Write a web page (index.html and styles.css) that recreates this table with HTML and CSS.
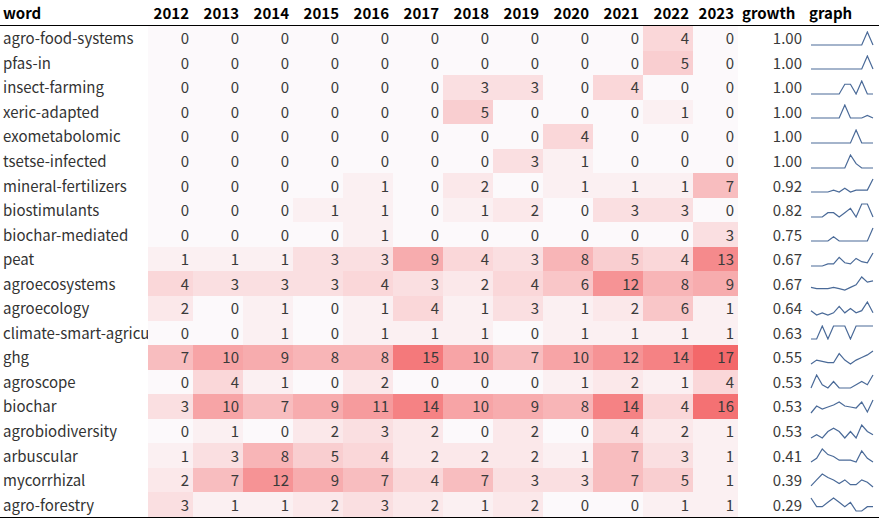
FILE: index.html
```html
<!DOCTYPE html>
<html lang="en">
<head>
<meta charset="utf-8">
<title>word growth</title>
<link rel="stylesheet" href="styles.css">
</head>
<body>
<table class="grid">
  <colgroup>
    <col class="c-word"><col class="c-first"><col class="c-year"><col class="c-year"><col class="c-year"><col class="c-year"><col class="c-year"><col class="c-year"><col class="c-year"><col class="c-year"><col class="c-year"><col class="c-year"><col class="c-last"><col class="c-growth"><col class="c-graph">
  </colgroup>
  <thead>
    <tr>
      <th class="h-word">word</th>
      <th class="h-num">2012</th><th class="h-num">2013</th><th class="h-num">2014</th><th class="h-num">2015</th><th class="h-num">2016</th><th class="h-num">2017</th><th class="h-num">2018</th><th class="h-num">2019</th><th class="h-num">2020</th><th class="h-num">2021</th><th class="h-num">2022</th><th class="h-num">2023</th>
      <th class="h-growth">growth</th>
      <th class="h-graph">graph</th>
    </tr>
  </thead>
  <tbody id="rows"></tbody>
</table>
<script src="script.js"></script>
</body>
</html>
```

FILE: styles.css
```css
html, body {
  margin: 0;
  padding: 0;
  background: #ffffff;
}
body {
  font-family: "Noto Sans CJK JP", "Noto Sans", sans-serif;
  font-size: 15px;
  color: #333333;
}
.grid {
  border-collapse: collapse;
  table-layout: fixed;
  width: 879px;
  border-bottom: 1px solid #000000;
}
.c-word { width: 148px; }
.c-first { width: 45px; }
.c-year { width: 50px; }
.c-last { width: 45px; }
.c-growth { width: 67px; }
.c-graph { width: 74px; }

.grid th {
  height: 25px;
  padding: 0;
  font-weight: 700;
  color: #000000;
  line-height: 25px;
  border-bottom: 1px solid #000000;
  white-space: nowrap;
}
.h-word { text-align: left; padding-left: 3px !important; }
.h-num { text-align: right; padding-right: 4px !important; }
.h-growth { text-align: left; padding-left: 4px !important; }
.h-graph { text-align: left; padding-left: 4px !important; }

.grid td {
  height: 24.55px;
  padding: 0;
  line-height: 24px;
  white-space: nowrap;
  overflow: hidden;
}
.word { text-align: left; padding-left: 3px !important; color: #333333; }
.num { text-align: right; padding-right: 4px !important; color: #3a3a3a; }
.growth { text-align: right; padding-right: 3px !important; color: #3a3a3a; }
.graph { padding-left: 5px !important; }
.spark {
  display: block;
  width: 64px;
  height: 15px;
}
.spark polyline {
  fill: none;
  stroke: #4a6a98;
  stroke-width: 1.2;
  stroke-linejoin: miter;
}
```

FILE: script.js
```js
var data = [
  ["agro-food-systems", [0,0,0,0,0,0,0,0,0,0,4,0], "1.00"],
  ["pfas-in", [0,0,0,0,0,0,0,0,0,0,5,0], "1.00"],
  ["insect-farming", [0,0,0,0,0,0,3,3,0,4,0,0], "1.00"],
  ["xeric-adapted", [0,0,0,0,0,0,5,0,0,0,1,0], "1.00"],
  ["exometabolomic", [0,0,0,0,0,0,0,0,4,0,0,0], "1.00"],
  ["tsetse-infected", [0,0,0,0,0,0,0,3,1,0,0,0], "1.00"],
  ["mineral-fertilizers", [0,0,0,0,1,0,2,0,1,1,1,7], "0.92"],
  ["biostimulants", [0,0,0,1,1,0,1,2,0,3,3,0], "0.82"],
  ["biochar-mediated", [0,0,0,0,1,0,0,0,0,0,0,3], "0.75"],
  ["peat", [1,1,1,3,3,9,4,3,8,5,4,13], "0.67"],
  ["agroecosystems", [4,3,3,3,4,3,2,4,6,12,8,9], "0.67"],
  ["agroecology", [2,0,1,0,1,4,1,3,1,2,6,1], "0.64"],
  ["climate-smart-agricu", [0,0,1,0,1,1,1,0,1,1,1,1], "0.63"],
  ["ghg", [7,10,9,8,8,15,10,7,10,12,14,17], "0.55"],
  ["agroscope", [0,4,1,0,2,0,0,0,1,2,1,4], "0.53"],
  ["biochar", [3,10,7,9,11,14,10,9,8,14,4,16], "0.53"],
  ["agrobiodiversity", [0,1,0,2,3,2,0,2,0,4,2,1], "0.53"],
  ["arbuscular", [1,3,8,5,4,2,2,2,1,7,3,1], "0.41"],
  ["mycorrhizal", [2,7,12,9,7,4,7,3,3,7,5,1], "0.39"],
  ["agro-forestry", [3,1,1,2,3,2,1,2,0,0,1,1], "0.29"]
];

var lo = [252, 249, 251];
var hi = [243, 104, 106];
var vmax = 17;

function shade(v) {
  var t = v / vmax;
  var c = [];
  for (var k = 0; k < 3; k++) {
    c.push(Math.round(lo[k] + (hi[k] - lo[k]) * t));
  }
  return "rgb(" + c.join(",") + ")";
}

function spark(vals) {
  var mn = Math.min.apply(null, vals);
  var mx = Math.max.apply(null, vals);
  var span = mx - mn || 1;
  var pts = vals.map(function (v, i) {
    var x = 1 + i * (62 / 11);
    var y = 1 + (1 - (v - mn) / span) * 13;
    return x.toFixed(2) + "," + y.toFixed(2);
  }).join(" ");
  return '<svg class="spark" viewBox="0 0 64 15" xmlns="http://www.w3.org/2000/svg"><polyline points="' + pts + '"/></svg>';
}

var body = document.getElementById("rows");
var html = "";
data.forEach(function (row) {
  html += "<tr>";
  html += '<td class="word">' + row[0] + "</td>";
  row[1].forEach(function (v) {
    html += '<td class="num" style="background:' + shade(v) + '">' + v + "</td>";
  });
  html += '<td class="growth">' + row[2] + "</td>";
  html += '<td class="graph">' + spark(row[1]) + "</td>";
  html += "</tr>";
});
body.innerHTML = html;
```
